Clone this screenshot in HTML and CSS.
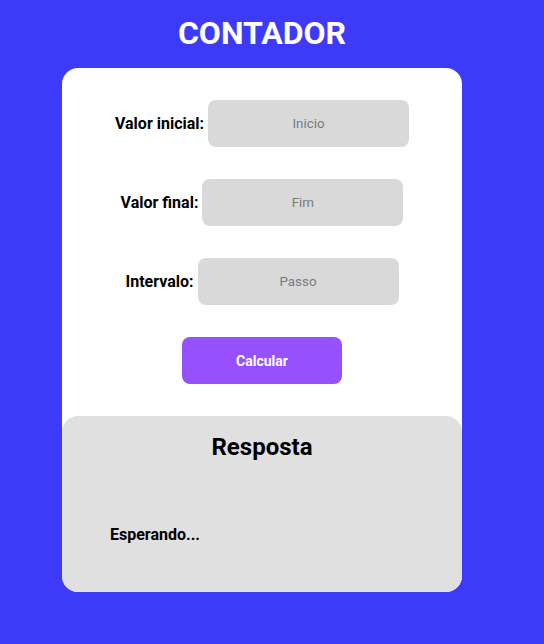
FILE: index.html
```html
<!DOCTYPE html>
<html lang="pt">
<head>
<meta charset="utf-8">
<title>Contador</title>
<link rel="stylesheet" href="styles.css">
</head>
<body>
<div class="page">
  <h1 class="title">CONTADOR</h1>
  <div class="card">
    <div class="form">
      <div class="row">
        <label class="label" for="ini">Valor inicial:</label>
        <input class="field" id="ini" type="number" placeholder="Inicio">
      </div>
      <div class="row">
        <label class="label" for="fim">Valor final:</label>
        <input class="field" id="fim" type="number" placeholder="Fim">
      </div>
      <div class="row">
        <label class="label" for="passo">Intervalo:</label>
        <input class="field" id="passo" type="number" placeholder="Passo">
      </div>
      <div class="actions">
        <button class="btn" type="button">Calcular</button>
      </div>
    </div>
    <div class="result">
      <h2 class="result-title">Resposta</h2>
      <p class="result-text">Esperando...</p>
    </div>
  </div>
</div>
</body>
</html>
```
FILE: styles.css
```css
html, body {
  margin: 0;
  padding: 0;
}
body {
  background: #3d3bf9;
  font-family: Roboto, "Liberation Sans", sans-serif;
  min-height: 644px;
}
.page {
  width: 524px;
  display: flex;
  flex-direction: column;
  align-items: center;
}
.title {
  margin: 14px 0 16px;
  font-size: 32px;
  font-weight: 700;
  color: #ffffff;
  line-height: 38px;
}
.card {
  width: 400px;
  background: #ffffff;
  border-radius: 16px;
  overflow: hidden;
}
.form {
  padding: 32px 0 32px;
  display: flex;
  flex-direction: column;
  align-items: center;
  gap: 32px;
}
.row {
  display: flex;
  align-items: center;
  gap: 4px;
}
.label {
  font-size: 16px;
  font-weight: 700;
  color: #000;
}
.field {
  width: 201px;
  height: 47px;
  box-sizing: border-box;
  border: none;
  border-radius: 8px;
  background: #d9d9d9;
  text-align: center;
  font-family: Roboto, "Liberation Sans", sans-serif;
  font-size: 13.33px;
  color: #333;
  outline: none;
  -moz-appearance: textfield;
}
.field::-webkit-outer-spin-button,
.field::-webkit-inner-spin-button {
  -webkit-appearance: none;
  margin: 0;
}
.field::placeholder {
  color: #7a7a7a;
}
.actions {
  display: flex;
  justify-content: center;
}
.btn {
  width: 160px;
  height: 47px;
  border: none;
  border-radius: 8px;
  background: #9650fd;
  color: #ffffff;
  font-family: Roboto, "Liberation Sans", sans-serif;
  font-size: 14px;
  font-weight: 700;
}
.result {
  background: #e0e0e0;
  border-radius: 16px 16px 0 0;
  height: 176px;
  box-sizing: border-box;
  padding: 17px 48px 0;
}
.result-title {
  margin: 0;
  text-align: center;
  font-size: 24px;
  font-weight: 700;
  line-height: 28px;
  color: #000;
}
.result-text {
  margin: 64px 0 0;
  font-size: 16px;
  font-weight: 700;
  line-height: 19px;
  color: #000;
}
```
